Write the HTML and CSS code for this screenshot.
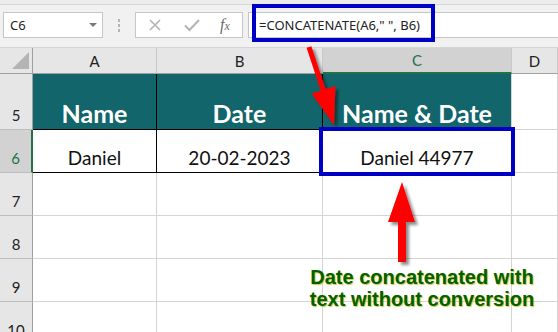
FILE: index.html
```html
<!DOCTYPE html>
<html>
<head>
<meta charset="utf-8">
<link rel="stylesheet" href="styles.css">
</head>
<body>
<div class="page">
  <div class="topstrip"></div>
  <div class="toolbar">
    <div class="namebox"><span class="ref">C6</span><span class="dd"></span></div>
    <div class="dots"><i></i><i></i><i></i></div>
    <div class="btns">
      <svg class="ico" width="16" height="16" viewBox="0 0 16 16"><path d="M3 3 L13 13 M13 3 L3 13" stroke="#b3b3b3" stroke-width="1.6" fill="none"/></svg>
      <svg class="ico" width="18" height="16" viewBox="0 0 18 16"><path d="M2 8.5 L6.5 13 L16 3" stroke="#b3b3b3" stroke-width="2" fill="none"/></svg>
      <span class="fx">f<span class="x">x</span></span>
    </div>
    <div class="formula">=CONCATENATE(A6," ", B6)</div>
  </div>
  <div class="sheet">
    <div class="corner"><span class="tri"></span></div>
    <div class="colh">A</div>
    <div class="colh">B</div>
    <div class="colh sel">C</div>
    <div class="colh">D</div>

    <div class="rowh">5</div>
    <div class="c head bk">Name</div>
    <div class="c head bk">Date</div>
    <div class="c head">Name &amp; Date</div>
    <div class="c"></div>

    <div class="rowh sel">6</div>
    <div class="c data bk bb">Daniel</div>
    <div class="c data bk bb">20-02-2023</div>
    <div class="c data bb">Daniel 44977</div>
    <div class="c"></div>

    <div class="rowh">7</div><div class="c"></div><div class="c"></div><div class="c"></div><div class="c"></div>
    <div class="rowh">8</div><div class="c"></div><div class="c"></div><div class="c"></div><div class="c"></div>
    <div class="rowh">9</div><div class="c"></div><div class="c"></div><div class="c"></div><div class="c"></div>
    <div class="rowh">10</div><div class="c"></div><div class="c"></div><div class="c"></div><div class="c"></div>
  </div>

  <div class="hl hl-formula"></div>
  <div class="hl hl-cell"></div>
  <svg class="arrows" width="558" height="332" viewBox="0 0 558 332">
    <defs>
      <filter id="sh" x="-30%" y="-30%" width="160%" height="160%">
        <feGaussianBlur in="SourceAlpha" stdDeviation="1.5"/>
        <feOffset dx="3" dy="3" result="b"/>
        <feComponentTransfer><feFuncA type="linear" slope="0.45"/></feComponentTransfer>
        <feMerge><feMergeNode/><feMergeNode in="SourceGraphic"/></feMerge>
      </filter>
    </defs>
    <g filter="url(#sh)" fill="#ff0000">
      <polygon points="306.6,47.8 311.4,46.2 326.4,91.6 321.6,93.2"/>
      <polygon points="311.6,93.6 335.4,86.0 334,125"/>
    </g>
    <g filter="url(#sh)" fill="#ff0000">
      <polygon points="402,182 388,222 415,222"/>
      <rect x="398" y="221" width="8" height="41"/>
    </g>
  </svg>
  <div class="callout">Date concatenated with<br>text without conversion</div>
</div>
</body>
</html>
```

FILE: styles.css
```css
html, body {
  margin: 0;
  padding: 0;
  background: #ffffff;
  overflow: hidden;
}
.page {
  position: relative;
  width: 558px;
  height: 332px;
  overflow: hidden;
  font-family: Lato, "Noto Sans", sans-serif;
}
.topstrip {
  height: 4px;
  background: #ececec;
  border-bottom: 1px solid #d6d6d6;
}
.toolbar {
  height: 42px;
  box-sizing: border-box;
  background: #f1f1f1;
  display: flex;
  align-items: flex-start;
  padding: 7px 0 0 3px;
}
.namebox {
  width: 100px;
  height: 26px;
  box-sizing: border-box;
  background: #fff;
  border: 1px solid #c6c6c6;
  display: flex;
  align-items: center;
  justify-content: space-between;
  padding: 0 5px 0 6px;
  font-family: "Noto Sans", sans-serif;
  font-size: 13px;
  color: #222;
}
.dd {
  width: 0;
  height: 0;
  border-left: 4px solid transparent;
  border-right: 4px solid transparent;
  border-top: 4px solid #7a7a7a;
}
.dots {
  width: 32px;
  height: 26px;
  display: flex;
  flex-direction: column;
  align-items: center;
  justify-content: center;
  gap: 2px;
}
.dots i {
  display: block;
  width: 2px;
  height: 3px;
  background: #b5b5b5;
}
.btns {
  width: 108px;
  height: 26px;
  box-sizing: border-box;
  background: #fff;
  border: 1px solid #c6c6c6;
  display: flex;
  align-items: center;
  padding-left: 11px;
  gap: 20px;
}
.fx {
  font-family: "Liberation Serif", serif;
  font-style: italic;
  font-size: 16px;
  color: #6a6a6a;
  margin-left: -1px;
}
.fx .x {
  font-size: 12px;
}
.formula {
  flex: 1;
  height: 26px;
  box-sizing: border-box;
  margin-left: 5px;
  background: #fff;
  border-top: 1px solid #c6c6c6;
  border-bottom: 1px solid #c6c6c6;
  border-left: 1px solid #c6c6c6;
  display: flex;
  align-items: center;
  padding-left: 10px;
  font-family: "Noto Sans", sans-serif;
  font-size: 13px;
  color: #222;
  white-space: nowrap;
}
.sheet {
  display: grid;
  grid-template-columns: 33px 124px 166px 189px 46px;
  grid-template-rows: 26px 56px 43px 43px 43px 43px 43px;
  border-top: 1px solid #d6d6d6;
}
.corner {
  background: #e6e6e6;
  border-right: 1px solid #a0a0a0;
  border-bottom: 1px solid #a0a0a0;
  position: relative;
}
.tri {
  position: absolute;
  right: 3px;
  bottom: 4px;
  width: 0;
  height: 0;
  border-left: 17px solid transparent;
  border-bottom: 17px solid #b4b4b4;
}
.colh {
  background: #e6e6e6;
  border-right: 1px solid #c8c8c8;
  border-bottom: 1px solid #a0a0a0;
  display: flex;
  align-items: center;
  justify-content: center;
  font-size: 15px;
  color: #222;
}
.colh.sel {
  background: #d2d2d2;
  color: #217346;
  border-bottom: 2px solid #217346;
}
.rowh {
  background: #e6e6e6;
  border-right: 1px solid #a0a0a0;
  border-bottom: 1px solid #bdbdbd;
  display: flex;
  align-items: flex-end;
  justify-content: center;
  padding-bottom: 5px;
  box-sizing: border-box;
  font-size: 15px;
  color: #222;
}
.rowh.sel {
  background: #d2d2d2;
  color: #217346;
  border-right: 2px solid #217346;
}
.c {
  border-right: 1px solid #d4d4d4;
  border-bottom: 1px solid #d4d4d4;
  display: flex;
  align-items: flex-end;
  justify-content: center;
  box-sizing: border-box;
  white-space: nowrap;
}
.c.head {
  background: #12666b;
  color: #fff;
  font-weight: 700;
  font-size: 25px;
  padding-bottom: 1px;
  border-bottom-color: #000;
}
.c.data {
  font-size: 19px;
  color: #111;
  padding-bottom: 3px;
}
.c.bk { border-right-color: #000; }
.c.bb { border-bottom-color: #000; }
.hl {
  position: absolute;
  box-sizing: border-box;
  border: 4px solid #0000c4;
}
.hl-formula {
  left: 252px;
  top: 4px;
  width: 183px;
  height: 38px;
}
.hl-cell {
  left: 319px;
  top: 127px;
  width: 196px;
  height: 49px;
}
.arrows {
  position: absolute;
  left: 0;
  top: 0;
}
.callout {
  position: absolute;
  left: 282px;
  top: 266px;
  width: 280px;
  text-align: center;
  font-family: "Liberation Sans", Arial, sans-serif;
  font-weight: 700;
  font-size: 20px;
  line-height: 22px;
  color: #006100;
  text-shadow: 1px 1px 1px rgba(190, 170, 0, 0.7);
}
```
